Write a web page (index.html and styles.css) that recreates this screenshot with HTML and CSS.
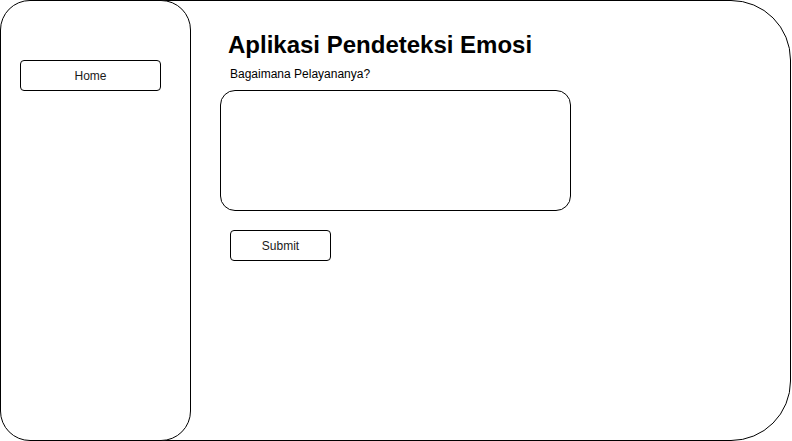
FILE: index.html
```html
<!DOCTYPE html>
<html lang="id">
<head>
<meta charset="utf-8">
<title>Aplikasi Pendeteksi Emosi</title>
<link rel="stylesheet" href="styles.css">
</head>
<body>
<div class="frame">
  <aside class="sidebar">
    <button class="nav-btn">Home</button>
  </aside>
  <main class="main">
    <h1 class="title">Aplikasi Pendeteksi Emosi</h1>
    <label class="question" for="answer">Bagaimana Pelayananya?</label>
    <textarea id="answer" class="answer"></textarea>
    <button class="submit">Submit</button>
  </main>
</div>
</body>
</html>
```

FILE: styles.css
```css
* { box-sizing: border-box; }
html, body { margin: 0; padding: 0; background: #fff; }
body {
  font-family: "Liberation Sans", Arial, Helvetica, sans-serif;
  color: #000;
  width: 792px;
  height: 441px;
  overflow: hidden;
}
.frame {
  width: 791px;
  height: 441px;
  border: 1px solid #000;
  border-radius: 60px;
  display: flex;
  align-items: stretch;
  background: #fff;
}
.sidebar {
  width: 191px;
  margin: -1px 0 -1px -1px;
  border: 1px solid #000;
  border-radius: 30px;
  background: #fff;
  padding: 59px 0 0 19px;
  display: flex;
  flex-direction: column;
  align-items: flex-start;
}
.nav-btn {
  width: 141px;
  height: 31px;
  border: 1px solid #000;
  border-radius: 4px;
  background: #fff;
  font: 12px "Liberation Sans", Arial, sans-serif;
  color: #1a1a1a;
  padding: 0;
}
.main {
  flex: 1;
  display: flex;
  flex-direction: column;
  align-items: flex-start;
  padding-top: 30px;
}
.title {
  margin: 0 0 0 37px;
  font-size: 24px;
  line-height: 28px;
  font-weight: bold;
}
.question {
  margin: 8px 0 0 39px;
  font-size: 12px;
  line-height: 14px;
}
.answer {
  margin: 9px 0 0 29px;
  width: 351px;
  height: 121px;
  border: 1px solid #000;
  border-radius: 15px;
  resize: none;
  outline: none;
  background: #fff;
  font: 12px "Liberation Sans", Arial, sans-serif;
}
.submit {
  margin: 19px 0 0 39px;
  width: 101px;
  height: 31px;
  border: 1px solid #000;
  border-radius: 4px;
  background: #fff;
  font: 12px "Liberation Sans", Arial, sans-serif;
  color: #1a1a1a;
  padding: 0;
}
```
